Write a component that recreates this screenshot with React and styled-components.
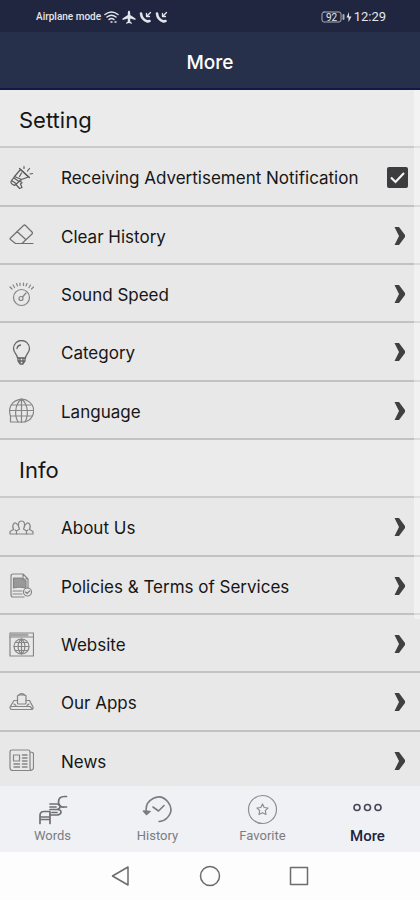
import React, { useState } from "react";
import styled, { createGlobalStyle } from "styled-components";

const GlobalStyle = createGlobalStyle`
  *, *::before, *::after { box-sizing: border-box; }
  body { margin: 0; background: #fdfdfd; }
`;

const Screen = styled.div`
  display: flex;
  flex-direction: column;
  height: 100vh;
  overflow: hidden;
  background: #fdfdfd;
  color: #161617;
  font-family: Inter, "Liberation Sans", sans-serif;
`;

const StatusBar = styled.div`
  flex: none;
  display: flex;
  align-items: center;
  justify-content: space-between;
  height: 32px;
  padding: 1px 34px 0 36px;
  background: #20263f;
  color: #e3e5ec;
  font-family: Roboto, sans-serif;
`;

const StatusGroup = styled.div`
  display: flex;
  align-items: center;
  gap: ${(p) => (p.$large ? 2 : 3)}px;
  font-size: ${(p) => (p.$large ? 13 : 10)}px;
  font-weight: ${(p) => (p.$large ? 400 : 500)};
  line-height: 16px;
`;

const TitleBar = styled.header`
  flex: none;
  display: flex;
  align-items: center;
  justify-content: center;
  height: 58px;
  padding-top: 5px;
  background: #26304a;
  border-bottom: 2px solid #0f1b42;
`;

const Title = styled.h1`
  margin: 0;
  color: #fff;
  font-size: 19px;
  font-weight: 500;
  line-height: 24px;
`;

const Content = styled.main`
  position: relative;
  flex: 1;
  min-height: 0;
  overflow: hidden;
  background: #e8e8e8;
`;

const ScrollThumb = styled.div`
  position: absolute;
  top: 0;
  right: 0;
  width: 6px;
  height: 76%;
  background: rgba(255, 255, 255, 0.4);
`;

const Section = styled.section`
  display: grid;
  grid-auto-rows: 1fr;
  min-height: 350px;
`;

const SectionTitle = styled.h2`
  display: flex;
  align-items: center;
  margin: 0;
  padding: 4px 19px 0;
  background: #ebebeb;
  border-bottom: 2px solid #cacaca;
  font-size: 22px;
  font-weight: 400;
  line-height: 28px;
`;

const rowStyles = `
  display: grid;
  grid-template-columns: 25px 1fr auto;
  align-items: center;
  column-gap: 27px;
  width: 100%;
  margin: 0;
  padding: 2px 12px 0 9px;
  border: 0;
  border-bottom: 2px solid #c2c2c2;
  background: transparent;
  color: inherit;
  font: inherit;
  font-size: 17px;
  line-height: 24px;
  text-align: left;
`;

const RowButton = styled.button`
  ${rowStyles}
  cursor: pointer;
`;

const RowLabel = styled.label`
  ${rowStyles}
`;

const RowText = styled.span`
  min-width: 0;
  padding-top: 2px;
  white-space: nowrap;
`;

const Checkbox = styled.input`
  appearance: none;
  width: 21px;
  height: 21px;
  margin: 0;
  border: 2px solid #3d3d3f;
  border-radius: 2px;
  background: transparent;
  &:checked {
    background: #3d3d3f url("data:image/svg+xml,%3Csvg xmlns='http://www.w3.org/2000/svg' viewBox='0 0 17 17'%3E%3Cpath d='M2 8.5 6.5 13 15 4' fill='none' stroke='%23f4f4f4' stroke-width='2.2'/%3E%3C/svg%3E") center / 17px 17px no-repeat;
  }
`;

const LineIcon = styled.svg`
  display: block;
  width: ${(p) => p.$w || 25}px;
  height: ${(p) => p.$h || 25}px;
  fill: none;
  stroke: ${(p) => p.$color || "#858585"};
  stroke-width: ${(p) => p.$stroke || 1.2};
  stroke-linecap: round;
  stroke-linejoin: round;
`;

const Chevron = () => (
  <LineIcon $w={15} $h={20} viewBox="0 0 15 20" aria-hidden="true">
    <path d="M1.500 1H6L12 9V11L6 19H1.500L6 10Z" fill="#404042" stroke="none" />
  </LineIcon>
);

const TabBar = styled.nav`
  flex: none;
  display: grid;
  grid-template-columns: repeat(4, 1fr);
  height: 66px;
  background: #eff1f5;
`;

const Tab = styled.button`
  display: flex;
  flex-direction: column;
  align-items: center;
  gap: 2px;
  padding: 8px 0 0;
  border: 0;
  background: none;
  color: ${(p) => (p.$active ? "#1d2340" : "#7b7c80")};
  font-family: Roboto, sans-serif;
  font-size: ${(p) => (p.$active ? 15 : 13)}px;
  font-weight: ${(p) => (p.$active ? 500 : 400)};
  line-height: 18px;
  cursor: pointer;
`;

const SystemBar = styled.div`
  flex: none;
  display: flex;
  justify-content: center;
  gap: 65px;
  height: 48px;
  padding-top: 12px;
  background: #fdfdfd;
`;

const SystemButton = styled.button`
  width: 24px;
  height: 24px;
  padding: 0;
  border: 0;
  background: none;
`;

const icons = {
  megaphone: (
    <g stroke="#5c5c5c">
      <path d="M11.500 4.500 19.500 12 12.500 14.500 5.500 11.500Z" />
      <path d="M10.500 3.500 20.500 12.500M5.500 11.500 2 16.500Q1.500 18 3 19L5.500 20.500 12.500 14.500M2.500 15.500 7 18.500M5 13 10 16.500" />
      <path d="M7 19.500 10.500 23.500 13 22.500 11.500 19 13 17.500 10.500 16" />
      <path d="M12.500 8 10.500 11.500M18.500 6 20.500 3.500M15 3.500V1.500M21 9 23.500 8.500" />
    </g>
  ),
  eraser: (
    <g stroke="#707070">
      <path d="M1.500 15 14.500 2.500Q15.500 1.500 16.500 2.500L23 9Q24 10 23 11L13 20.500H6.500L1.500 16.500Q.5 15.700 1.500 15ZM8 8.500 17 16.700M13 20.500H24" />
    </g>
  ),
  speed: (
    <g>
      <circle cx="12.500" cy="15.500" r="8" />
      <circle cx="12" cy="16.500" r="2" />
      <path d="M13.500 15 17 11M1 5 3 7M4 3 5.500 5.500M7.500 1.500 8.500 4M11 1V3.500M14.500 1V3.500M18 1.500 17 4M21.500 3 20 5.500M24.500 5 22.500 7" />
    </g>
  ),
  bulb: (
    <g stroke="#666" strokeWidth="1.300">
      <path d="M8.500 18C8.500 14.500 4.500 13 4.500 8.500A8 8 0 0 1 20.500 8.500C20.500 13 16.500 14.500 16.500 18Z" />
      <path d="M9 18V21L11 24H14L16 21V18M9 21H16M11 18V23M14 18V23M8 8.500Q8.500 5.500 11.500 5" />
    </g>
  ),
  globe: (
    <g>
      <path d="M1.500 24V18Q0 14 1 10A12 11.500 0 1 1 17 23.500Q14 24.300 10 24Z" />
      <path d="M1 12.500H24M3 7H22M2 18H23M12.500 1V24M12.500 1C6 6 5 17 9 24M12.500 1C19 6 20 17 16 24" />
    </g>
  ),
  people: (
    <g>
      <path d="M7.500 19V16L10.500 14Q9 11.500 9.500 8.500Q10 6 12.500 6T15.500 8.500Q16 11.500 14.500 14L17.500 16V19Z" />
      <path d="M7.500 19H1V16.500L4.500 14.500Q3 11 4.500 9Q7 6.500 8.500 10M17.500 19H24V16.500L20.500 14.500Q22 11 20.500 9Q18 6.500 16.500 10M6 15 7.500 16M19 15 17.500 16" />
    </g>
  ),
  policy: (
    <g>
      <path d="M15 24H4Q2 24 2 22V3Q2 1 4 1H14L19 6V15M14 1V6H19" />
      <path d="M4.500 5H12L17 8V15L10 14 4.500 15Z" fill="#999" />
      <path d="M4 18H13M4 21H13" />
      <circle cx="18.500" cy="19" r="4" />
      <path d="M16.500 19 18 20.500 20.500 18" />
    </g>
  ),
  website: (
    <g>
      <rect x="1" y="1" width="23.500" height="23" />
      <path d="M1 5H24" />
      <path d="M2 3H18" stroke="#a5a5a5" strokeWidth="3" />
      <circle cx="12.500" cy="14.500" r="7.500" />
      <path d="M5 14.500H20M6.500 10.500H18.500M6.500 18.500H18.500M12.500 7V22M12.500 7C8 10.500 8 18.500 12.500 22M12.500 7C17 10.500 17 18.500 12.500 22" />
    </g>
  ),
  apps: (
    <g>
      <rect x="8.500" y="5" width="8.500" height="9" rx="1" />
      <path d="M10 5Q12.500 2.500 15.500 5M8.500 10.500H5L1 17Q1 19.500 3 19.500H22Q24.500 19.500 24 17L20.500 10.500H17M2 16.500H21L23 18.500M5 14 7 15.500M18 15.500 20 14" />
    </g>
  ),
  news: (
    <g>
      <path d="M4 22.500Q1 22.500 1 19.500V4Q1 2 3 2H19Q21 2 21 4V19.500Q21 22.500 23 22Q24.500 21.500 24.500 19V6Q24.500 4 21 4M4 22.500H22" />
      <rect x="4.500" y="7" width="6" height="6" />
      <path d="M13.500 7H18M13.500 10H18M13.500 13H18M13.500 16H18M13.500 19H18M5 16H10.500M5 19H10.500" strokeWidth="1.500" />
    </g>
  ),
};

const RowIcon = ({ name }) => (
  <LineIcon viewBox="0 0 25 25" aria-hidden="true">
    {icons[name]}
  </LineIcon>
);

const settings = [
  ["eraser", "Clear History"],
  ["speed", "Sound Speed"],
  ["bulb", "Category"],
  ["globe", "Language"],
];

const info = [
  ["people", "About Us"],
  ["policy", "Policies & Terms of Services"],
  ["website", "Website"],
  ["apps", "Our Apps"],
  ["news", "News"],
];

const LinkRow = ({ icon, text }) => (
  <RowButton type="button">
    <RowIcon name={icon} />
    <RowText>{text}</RowText>
    <Chevron />
  </RowButton>
);

const CallIcon = () => (
  <LineIcon $w={13} $h={14} $color="#e3e5ec" $stroke={1.3} viewBox="0 0 13 14" aria-hidden="true">
    <path d="M2 3.500Q2.500 9.500 8.500 11.500L10.500 11" strokeWidth="2.600" />
    <path d="M11.500 2.500 7.500 6.500M7.500 3.500V6.500H10.500" />
  </LineIcon>
);

const tabs = [
  {
    label: "Words",
    icon: (
      <g stroke="#6f7073" strokeWidth="1.700">
        <path d="M3 29.500V21.500Q3 17.500 7 17.500H13V29.500M3 23H13M3 25.500H13" />
        <path d="M13 10H20Q23 10 23 12.500T20 15.500Q24 15.500 24 18T20 21H13M13 13H19M13 15.500H20M15 18.500H20" />
        <path d="M29.500 2.500H27.500Q21.500 2.500 21.500 8T27.500 13H29.500" />
      </g>
    ),
  },
  {
    label: "History",
    icon: (
      <g strokeWidth="1.600">
        <path d="M4.500 19Q2.500 9 11 4.500T26 8T25 24Q21.500 27.500 17 27.500" />
        <path d="M1.500 17 4.500 20.500 8 17.500Z" fill="#7b7c80" />
        <path d="M11 13 16.500 17 22 11.500" />
      </g>
    ),
  },
  {
    label: "Favorite",
    icon: (
      <g stroke="#8d8e91">
        <circle cx="15.500" cy="15.500" r="14" />
        <path d="M15.500 10 17.200 13.500 21 14 18.300 16.700 19 20.500 15.500 18.700 12 20.500 12.700 16.700 10 14 13.800 13.500Z" />
      </g>
    ),
  },
  {
    label: "More",
    icon: (
      <g stroke="#44475a" strokeWidth="1.600">
        <circle cx="5" cy="13.500" r="3" />
        <circle cx="15.500" cy="13.500" r="3" />
        <circle cx="26" cy="13.500" r="3" />
      </g>
    ),
  },
];

export default function App() {
  const [notify, setNotify] = useState(true);
  return (
    <Screen>
      <GlobalStyle />
      <StatusBar>
        <StatusGroup>
          <span>Airplane mode</span>
          <LineIcon $w={15} $h={14} $color="#e3e5ec" viewBox="0 0 15 14" aria-hidden="true">
            <path d="M1 4.500Q7.500-.5 14 4.500M3 7Q7.500 3.500 12 7M5 9.500Q7.500 7.500 10 9.500M7 12H8M11 12H12" strokeWidth="1.500" />
          </LineIcon>
          <LineIcon $w={14} $h={14} viewBox="0 0 14 14" aria-hidden="true">
            <path d="M7 .5Q8.200.5 8.200 3V5L13.500 8.500V10L8.200 8.500V11.500L10 13V13.800L7 13 4 13.800V13L5.800 11.500V8.500L.5 10V8.500L5.800 5V3Q5.800.5 7 .5Z" fill="#e3e5ec" stroke="none" />
          </LineIcon>
          <CallIcon />
          <CallIcon />
        </StatusGroup>
        <StatusGroup $large>
          <LineIcon $w={31} $h={14} $color="#a9adbb" $stroke={1} viewBox="0 0 31 14" aria-label="Battery 92%">
            <rect x="1" y="2" width="19" height="10" rx="2" />
            <path d="M22.500 5V9" strokeWidth="2" />
            <path d="M28 2 25.500 7.500H27.500V12L30.500 6.500H28Z" fill="#e3e5ec" stroke="none" />
            <text x="10.500" y="10.500" textAnchor="middle" fontSize="10" fill="#e3e5ec" stroke="none">92</text>
          </LineIcon>
          <span>12:29</span>
        </StatusGroup>
      </StatusBar>
      <TitleBar>
        <Title>More</Title>
      </TitleBar>
      <Content>
        <Section>
          <SectionTitle>Setting</SectionTitle>
          <RowLabel>
            <RowIcon name="megaphone" />
            <RowText>Receiving Advertisement Notification</RowText>
            <Checkbox type="checkbox" checked={notify} onChange={(e) => setNotify(e.target.checked)} />
          </RowLabel>
          {settings.map(([icon, text]) => (
            <LinkRow key={text} icon={icon} text={text} />
          ))}
        </Section>
        <Section>
          <SectionTitle>Info</SectionTitle>
          {info.map(([icon, text]) => (
            <LinkRow key={text} icon={icon} text={text} />
          ))}
        </Section>
        <ScrollThumb />
      </Content>
      <TabBar>
        {tabs.map(({ label, icon }) => (
          <Tab key={label} type="button" $active={label === "More"}>
            <LineIcon $w={31} $h={31} $color="#7b7c80" viewBox="0 0 31 31" aria-hidden="true">
              {icon}
            </LineIcon>
            <span>{label}</span>
          </Tab>
        ))}
      </TabBar>
      <SystemBar>
        <SystemButton type="button" aria-label="Back">
          <LineIcon $w={24} $h={24} $color="#6c6c6c" $stroke={1.5} viewBox="0 0 24 24">
            <path d="M19 3V21L3.500 12Z" />
          </LineIcon>
        </SystemButton>
        <SystemButton type="button" aria-label="Home">
          <LineIcon $w={24} $h={24} $color="#6c6c6c" $stroke={1.5} viewBox="0 0 24 24">
            <circle cx="12" cy="12" r="9.500" />
          </LineIcon>
        </SystemButton>
        <SystemButton type="button" aria-label="Recent apps">
          <LineIcon $w={24} $h={24} $color="#6c6c6c" $stroke={1.5} viewBox="0 0 24 24">
            <rect x="3.500" y="3.500" width="17" height="17" />
          </LineIcon>
        </SystemButton>
      </SystemBar>
    </Screen>
  );
}
